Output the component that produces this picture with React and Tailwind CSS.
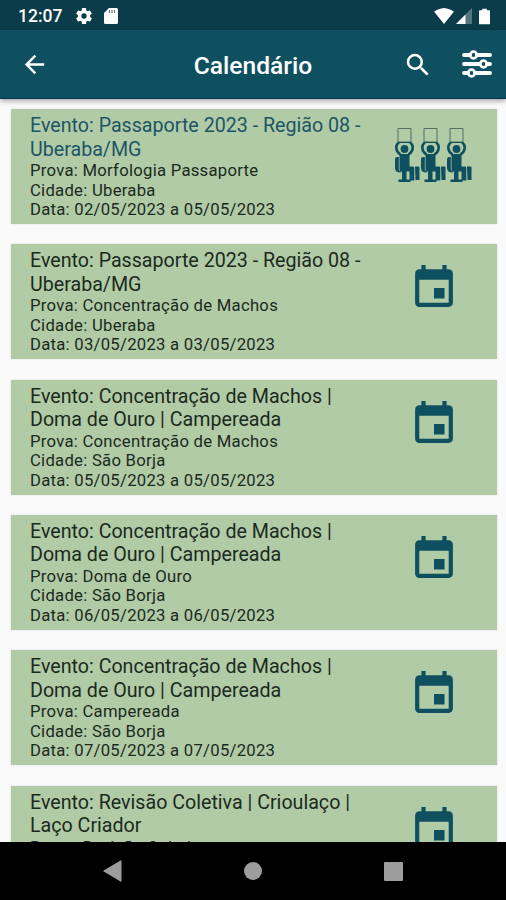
import React from 'react';

const events = [
  { title: 'Passaporte 2023 - Região 08 - Uberaba/MG', prova: 'Morfologia Passaporte', cidade: 'Uberaba', data: '02/05/2023 a 05/05/2023', judged: true },
  { title: 'Passaporte 2023 - Região 08 - Uberaba/MG', prova: 'Concentração de Machos', cidade: 'Uberaba', data: '03/05/2023 a 03/05/2023' },
  { title: 'Concentração de Machos | Doma de Ouro | Campereada', prova: 'Concentração de Machos', cidade: 'São Borja', data: '05/05/2023 a 05/05/2023' },
  { title: 'Concentração de Machos | Doma de Ouro | Campereada', prova: 'Doma de Ouro', cidade: 'São Borja', data: '06/05/2023 a 06/05/2023' },
  { title: 'Concentração de Machos | Doma de Ouro | Campereada', prova: 'Campereada', cidade: 'São Borja', data: '07/05/2023 a 07/05/2023' },
  { title: 'Revisão Coletiva | Crioulaço | Laço Criador', prova: 'Revisão Coletiva' },
];

const StatusBar = () => (
  <div className="flex h-[30px] shrink-0 items-center bg-[#0a3c4a] pl-[18px] pr-[16px] pt-[2px] text-white">
    <span className="w-[46px] pt-[2px] text-[17.5px] font-medium leading-none">12:07</span>
    <svg viewBox="0 0 24 24" className="ml-[10px] size-[20px]" fill="currentColor">
      <path d="M19.14 12.94c.04-.3.06-.61.06-.94s-.02-.64-.07-.94l2.03-1.58a.49.49 0 0 0 .12-.61l-1.92-3.32a.49.49 0 0 0-.59-.22l-2.39.96a7 7 0 0 0-1.62-.94l-.36-2.54a.48.48 0 0 0-.48-.41h-3.84a.47.47 0 0 0-.47.41l-.36 2.54c-.59.24-1.13.57-1.62.94l-2.39-.96a.48.48 0 0 0-.59.22L2.74 8.87a.48.48 0 0 0 .12.61l2.03 1.58a7.6 7.6 0 0 0 0 1.88l-2.03 1.58a.49.49 0 0 0-.12.61l1.92 3.32c.12.22.37.29.59.22l2.39-.96c.5.38 1.03.7 1.62.94l.36 2.54c.05.24.24.41.48.41h3.84c.24 0 .44-.17.47-.41l.36-2.54c.59-.24 1.13-.56 1.62-.94l2.39.96c.22.08.47 0 .59-.22l1.92-3.32a.48.48 0 0 0-.12-.61zM12 15.2a3.2 3.2 0 1 1 0-6.4 3.2 3.2 0 0 1 0 6.4z" />
    </svg>
    <svg viewBox="0 0 14 16" className="ml-[10px] h-[16px] w-[14px]">
      <path d="M5 0h7.5Q14 0 14 1.5v13q0 1.5-1.5 1.5h-11Q0 16 0 14.5V5z" fill="#fff" />
      <path d="M5.5 2v3M8 2v3M10.5 2v3" stroke="#5c7c86" strokeWidth="1.2" />
    </svg>
    <svg viewBox="0 0 20 16" className="ml-auto h-[16px] w-[20px]" fill="currentColor">
      <path d="M0 3.5Q10-3.5 20 3.5L10 16z" />
    </svg>
    <svg viewBox="0 0 16 16" className="ml-[2px] size-[16px]" fill="currentColor">
      <path d="M16 0v16H0z" opacity=".3" />
      <path d="M9.5 6.5V16H0z" />
    </svg>
    <svg viewBox="0 0 12 17" className="ml-[7px] h-[17px] w-[11px]" fill="currentColor">
      <path d="M3.5 0h5v1.8H11q1 0 1 1V16q0 1-1 1H1q-1 0-1-1V2.8q0-1 1-1h2.5z" />
    </svg>
  </div>
);

const AppBar = () => (
  <header className="relative z-10 flex h-[69px] shrink-0 items-center border-b border-[#0a3550] bg-[#0e5060] pl-[20px] pr-[13px] text-white shadow-[0_2px_5px_rgba(0,0,0,0.35)]">
    <svg viewBox="0 0 24 24" className="size-[29px] shrink-0" fill="currentColor">
      <path d="M20 11H7.83l5.59-5.59L12 4l-8 8 8 8 1.41-1.41L7.83 13H20z" />
    </svg>
    <h1 className="flex-1 pl-[54px] pt-[4px] text-center text-[24.6px] font-medium leading-none">Calendário</h1>
    <svg viewBox="0 0 24 24" className="mt-[1px] size-[30px]" fill="currentColor">
      <path d="M15.5 14h-.79l-.28-.27A6.47 6.47 0 0 0 16 9.5 6.5 6.5 0 1 0 9.5 16c1.61 0 3.09-.59 4.23-1.57l.27.28v.79l5 4.99L20.49 19zm-6 0a4.5 4.5 0 1 1 0-9 4.5 4.5 0 0 1 0 9z" />
    </svg>
    <svg viewBox="0 0 32 30" className="ml-[28px] h-[30px] w-[32px]" fill="none" stroke="currentColor" strokeLinecap="round">
      <path d="M3 6h6M16 6h13M3 15h16M26 15h3M3 24h4M14 24h15" strokeWidth="3.8" />
      <g strokeWidth="2.6">
        <circle cx="12.5" cy="6" r="3.4" />
        <circle cx="22.5" cy="15" r="3.4" />
        <circle cx="10.5" cy="24" r="3.4" />
      </g>
    </svg>
  </header>
);

const EventIcon = () => (
  <svg viewBox="3 1 18 20" className="h-[42px] w-[38px]" fill="#0e5060">
    <path d="M17 12h-5v5h5zM16 1v2H8V1H6v2H5c-1.11 0-1.99.9-1.99 2L3 19a2 2 0 0 0 2 2h14c1.1 0 2-.9 2-2V5c0-1.1-.9-2-2-2h-1V1zm3 18H5V8h14z" />
  </svg>
);

// Seated judge holding up a score card
const Judge = () => (
  <svg viewBox="0 0 26 56" className="h-[56px] w-[26px]">
    <path d="M3 14V.5h13V14z" fill="none" stroke="#47675a" strokeWidth=".9" />
    <path d="M4 14.5C0 17 .5 23.5 5.5 26.5M15 14.5C19 17 18.5 23.5 13.5 26.5" fill="none" stroke="#0e5060" strokeWidth="2.6" />
    <path d="M4 14.5h11" stroke="#0e5060" strokeWidth="1" />
    <g fill="#0e5060">
      <circle cx="9.5" cy="21" r="3.9" />
      <path d="M4.5 26h10v12.5H18q1.3 0 1.3 1.5v12.5h-4.8V43.500H6.500q-2 0-2-2z" />
      <path d="M2.200 29h1.600v12.500q0 1.500 2 1.500v1.500Q0 44.500 0 40V31q0-2 2.200-2z" />
      <path d="M20 38.500h3.500q1 0 1 1V52H20.500z" />
      <path d="M7 43h4.500v8.500h4V54h-12v-2.500H7z" />
    </g>
  </svg>
);

const EventCard = ({ event }) => (
  <article className="mb-[20.33px] flex h-[115px] shrink-0 bg-[#b0cba6] pl-[19.5px] pt-[5.1px] text-[#1b2a1d] shadow-[0_0_2px_rgba(0,0,0,0.12)]">
    <div className="w-[342px] shrink-0">
      <h2 className={`text-[19.65px] leading-[23.4px] ${event.judged ? 'text-[#1d5565]' : ''}`}>
        {`Evento: ${event.title}`}
      </h2>
      <div className="text-[16.7px] leading-[19.6px] tracking-[0.26px]">
        <p>{`Prova: ${event.prova}`}</p>
        {event.cidade && <p>{`Cidade: ${event.cidade}`}</p>}
        {event.data && <p>{`Data: ${event.data}`}</p>}
      </div>
    </div>
    <div className="flex flex-1 justify-center pr-[1px]">
      {event.judged ? (
        <div className="mt-[14px] flex">
          <Judge />
          <Judge />
          <Judge />
        </div>
      ) : (
        <div className="mt-[16px]">
          <EventIcon />
        </div>
      )}
    </div>
  </article>
);

const NavigationBar = () => (
  <nav className="flex h-[58px] shrink-0 items-center justify-between bg-black pl-[103px] pr-[103px]">
    <svg viewBox="0 0 19 22" className="h-[22px] w-[19px]" fill="#9d9d9d">
      <path d="M18 .7v20.6L.7 11z" stroke="#9d9d9d" strokeLinejoin="round" />
    </svg>
    <div className="size-[18px] rounded-full bg-[#9d9d9d]" />
    <div className="size-[19px] rounded-[1px] bg-[#9d9d9d]" />
  </nav>
);

export default function App() {
  return (
    <div className="flex h-[900px] w-[506px] flex-col overflow-hidden bg-[#fafafa] font-['Roboto',sans-serif]">
      <StatusBar />
      <AppBar />
      <main className="flex min-h-0 flex-1 flex-col overflow-hidden pl-[10.5px] pr-[9.5px] pt-[10px]">
        {events.map((event, i) => (
          <EventCard key={i} event={event} />
        ))}
      </main>
      <NavigationBar />
    </div>
  );
}
